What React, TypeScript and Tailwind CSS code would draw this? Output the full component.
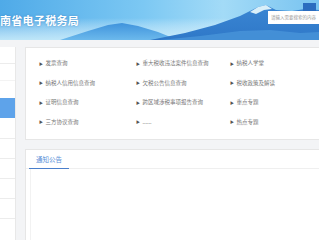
import React from "react";

const links: string[][] = [
  ["发票查询", "重大税收违法案件信息查询", "纳税人学堂"],
  ["纳税人信用信息查询", "欠税公告信息查询", "税收政策及解读"],
  ["证明信息查询", "跨区域涉税事项报告查询", "重点专题"],
  ["三方协议查询", "......", "热点专题"],
];

function HeaderArt() {
  return (
    <svg className="absolute inset-0" width="319" height="40" viewBox="0 0 319 40" preserveAspectRatio="none">
      <defs>
        <linearGradient id="sky" x1="0" y1="0" x2="1" y2="0">
          <stop offset="0" stopColor="#4faae8" />
          <stop offset="0.45" stopColor="#7cc8f3" />
          <stop offset="0.7" stopColor="#a3dbf7" />
          <stop offset="1" stopColor="#78c3f0" />
        </linearGradient>
        <linearGradient id="haze" x1="0" y1="0" x2="0" y2="1">
          <stop offset="0" stopColor="#ffffff" stopOpacity="0" />
          <stop offset="1" stopColor="#c9ecfa" stopOpacity="0.9" />
        </linearGradient>
        <linearGradient id="m1" x1="0" y1="0" x2="0" y2="1">
          <stop offset="0" stopColor="#3f93dc" />
          <stop offset="1" stopColor="#6cb9ec" />
        </linearGradient>
        <linearGradient id="m2" x1="0" y1="0" x2="0" y2="1">
          <stop offset="0" stopColor="#3a86d3" />
          <stop offset="1" stopColor="#2f78c8" />
        </linearGradient>
      </defs>
      <rect width="319" height="40" fill="url(#sky)" />
      <rect y="18" width="319" height="22" fill="url(#haze)" />
      <path d="M60 40 L88 31 L108 25 L122 23 L138 26 L158 32 L178 40 Z" fill="url(#m1)" />
      <path d="M150 40 L185 33 L215 25 L240 16 L258 7 L266 5 L276 10 L292 11 L305 9 L319 10 L319 40 Z" fill="url(#m2)" />
      <path d="M250 12 L258 7 L266 5 L272 9 L264 10 L256 14 Z" fill="#d9eff9" />
      <path d="M160 40 L200 36 L240 31 L270 30 L300 33 L319 32 L319 40 Z" fill="#4c99dc" opacity="0.7" />
      <rect x="303" y="3" width="13" height="9" fill="#2a6cbf" />
    </svg>
  );
}

export default function App() {
  return (
    <div
      className="w-[319px] h-[240px] overflow-hidden bg-[#f3f4f6]"
      style={{ fontFamily: '"Noto Sans CJK SC", "Noto Sans", sans-serif' }}
    >
      {/* Header */}
      <div className="relative h-[40px] flex items-start">
        <HeaderArt />
        <h1 className="relative mt-[13px] text-[11px] leading-[14px] font-bold text-white tracking-[0.3px] [text-shadow:0_0_2px_rgba(30,90,160,0.5)]">
          南省电子税务局
        </h1>
        <div className="relative ml-auto mt-[11px] w-[55px] h-[13px] shrink-0 -mr-[4px] bg-white flex items-center pl-[3px]">
          <span className="text-[4.5px] text-[#999] whitespace-nowrap">请输入需要搜索的内容</span>
        </div>
      </div>

      {/* Body */}
      <div className="flex pt-[7px]">
        {/* Sidebar */}
        <div className="w-[16px] shrink-0 h-[193px] bg-white border-r border-[#e8e8e8] flex flex-col">
          <div className="h-[17px] border-b border-[#ececec]" />
          <div className="h-[17px] border-b border-[#f3f3f3]" />
          <div className="h-[17px]" />
          <div className="h-[20px] bg-[#5ea3ea]" />
          <div className="h-[21px] border-b border-[#ececec]" />
          <div className="h-[20px] border-b border-[#ececec]" />
          <div className="h-[20px] border-b border-[#ececec]" />
          <div className="h-[20px] border-b border-[#ececec]" />
          <div className="h-[20px] border-b border-[#ececec]" />
        </div>

        {/* Main */}
        <div className="ml-[9px] flex flex-col gap-[9px]">
          <div className="w-[300px] h-[93px] bg-white border border-[#e6e6e6] pl-[13px] pt-[6px]">
            {links.map((row, i) => (
              <div key={i} className="flex h-[19.5px] items-center">
                {row.map((t, j) => (
                  <div
                    key={j}
                    className={`flex items-center gap-[2.5px] ${j === 0 ? "w-[101px]" : "w-[98px]"}`}
                  >
                    <span className="text-[4px] leading-none text-[#555]">▶</span>
                    <span className="text-[5.5px] leading-none text-[#777] whitespace-nowrap">{t}</span>
                  </div>
                ))}
              </div>
            ))}
          </div>

          <div className="w-[300px] h-[100px] bg-white border border-[#e6e6e6]">
            <div className="flex border-b border-[#efefef] pl-[3px]">
              <div className="w-[40px] h-[19px] flex items-center justify-center border-b-[1.5px] border-[#4a7fcb] -mb-px">
                <span className="text-[6.5px] leading-none text-[#5a8fd8]">通知公告</span>
              </div>
            </div>
            <div className="ml-[4px] h-full border-l border-[#f2f2f2]" />
          </div>
        </div>
      </div>
    </div>
  );
}
